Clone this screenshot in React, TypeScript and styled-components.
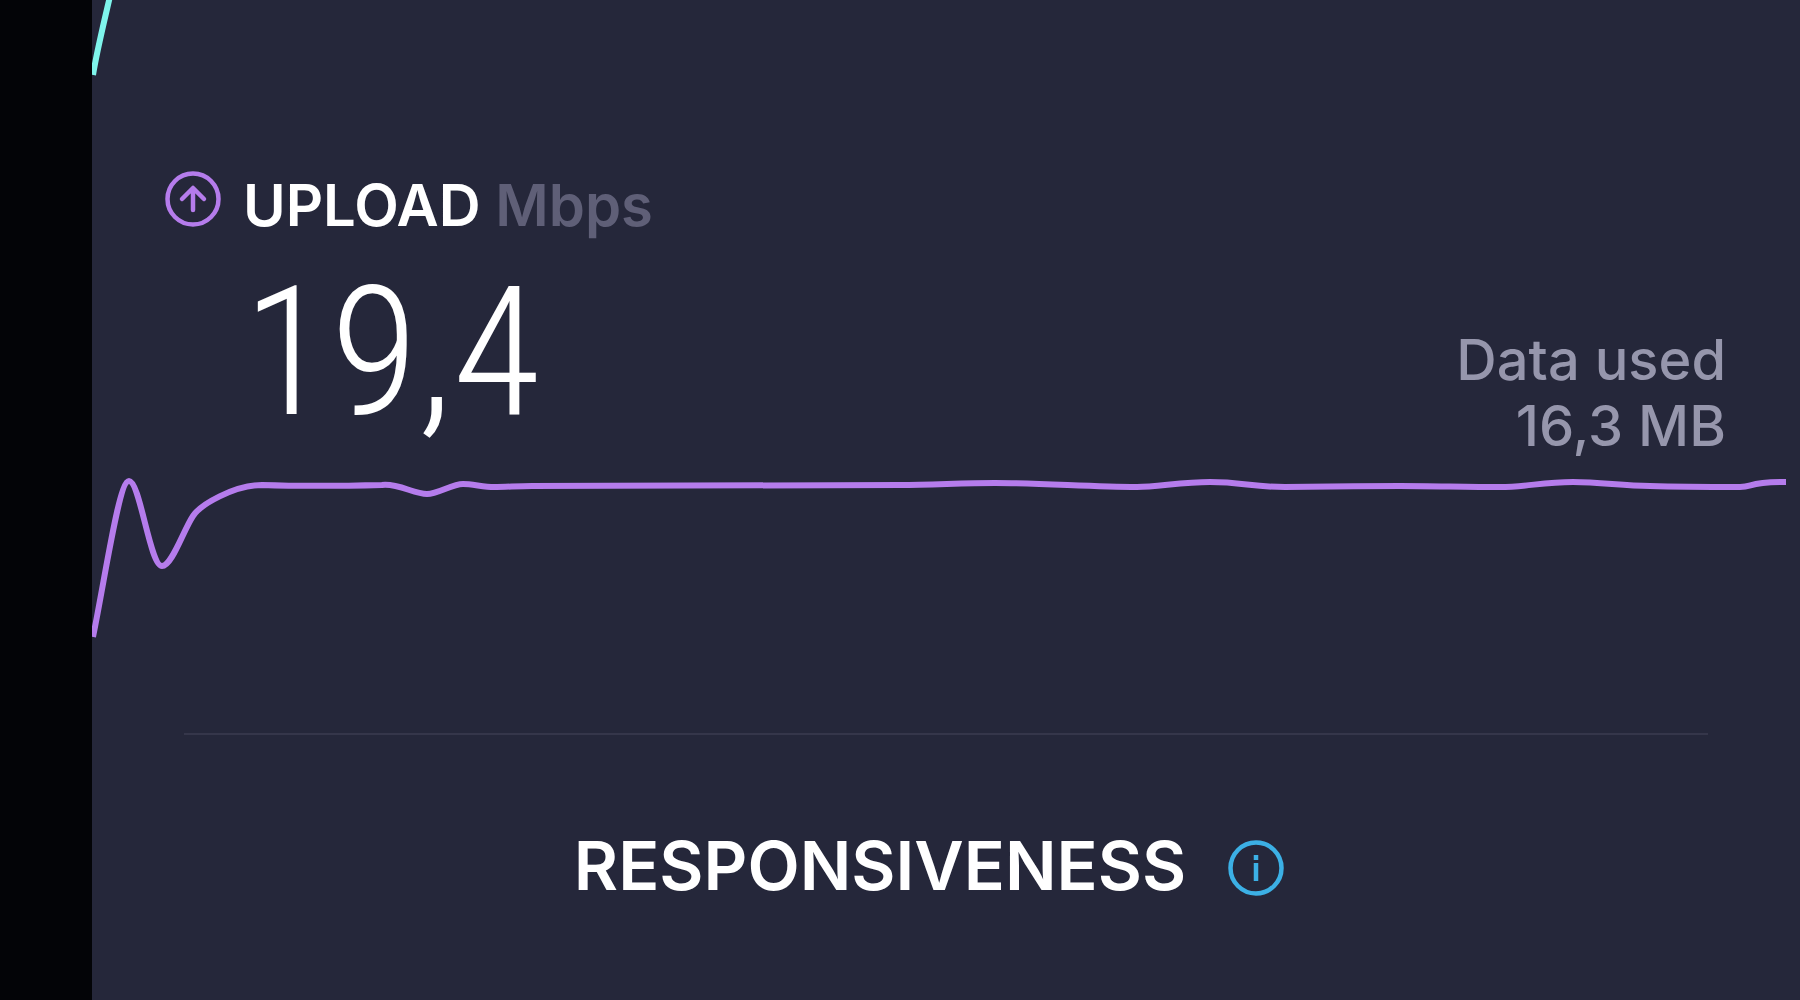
import React from 'react';
import styled, { createGlobalStyle } from 'styled-components';

const GlobalStyle = createGlobalStyle`
  * { box-sizing: border-box; }
  body {
    margin: 0;
    background: #25273a;
    color: #ffffff;
    font-family: Inter, "Liberation Sans", sans-serif;
    font-weight: 500;
  }
`;

const Page = styled.div`
  min-height: 100vh;
  padding-left: 92px;
  background: #030407;
`;

const Panel = styled.main`
  min-height: 100vh;
  background: #25273a;
  overflow: hidden;
`;

const Chart = styled.svg<{ $height: number }>`
  display: block;
  width: 100%;
  height: ${(p) => p.$height}px;
`;

const Trace = styled.path<{ $color: string }>`
  fill: none;
  stroke: ${(p) => p.$color};
  stroke-width: 6px;
  stroke-linejoin: round;
  vector-effect: non-scaling-stroke;
`;

const Summary = styled.section`
  display: flex;
  justify-content: space-between;
  align-items: flex-end;
  padding: 91px 74px 2px 73px;
`;

const Metric = styled.div`
  display: flex;
  align-items: flex-start;
  gap: 22px;
`;

const Icon = styled.svg<{ $color: string }>`
  display: block;
  flex: none;
  width: 56px;
  height: 56px;
  fill: none;
  stroke: ${(p) => p.$color};
  stroke-width: 4.5;
`;

const MetricTitle = styled.h2`
  margin: 0;
  font-size: 58px;
  line-height: 68px;
  font-weight: 600;
`;

const Unit = styled.span`
  color: #5f5f77;
`;

const Value = styled.p`
  margin: 4px 0 0;
  font-family: "Roboto Condensed", Roboto, sans-serif;
  font-size: 180px;
  line-height: 220px;
  font-weight: 300;
`;

const DataUsed = styled.p`
  margin: 0;
  padding-bottom: 4px;
  color: #9696ac;
  font-size: 56px;
  line-height: 66px;
  text-align: right;
`;

const Divider = styled.hr`
  height: 2px;
  margin: 88px 92px 0;
  border: 0;
  background: #35364a;
`;

const Responsiveness = styled.section`
  display: flex;
  justify-content: center;
  align-items: center;
  gap: 42px;
  padding: 89px 126px 89px 92px;
`;

const SectionTitle = styled.h2`
  margin: 0;
  padding-bottom: 6px;
  font-size: 68px;
  line-height: 82px;
  font-weight: 600;
`;

const InfoButton = styled.button`
  padding: 0;
  border: 0;
  background: none;
  cursor: pointer;
`;

const uploadTrace =
  'M1 172 C14 108 27 16 37 16 C48 16 58 101 70 101 C80 101 91 66 101 51 ' +
  'C108 40 142 20 170 20 C200 21 250 21 290 20 C306 18 322 29 335 29 C346 29 360 19 371 19 ' +
  'C380 19 392 22 402 22 C415 22 425 21 440 21 C580 20 700 20 808 20 C840 20 870 18 903 18 ' +
  'C950 18 1000 22 1045 22 C1065 22 1090 17 1118 17 C1150 17 1160 22 1193 22 ' +
  'C1230 22 1270 21 1308 21 C1340 21 1375 22 1408 22 C1435 22 1450 17 1481 17 ' +
  'C1510 17 1530 21 1558 21 C1590 22 1620 22 1648 22 C1662 22 1655 17 1694 17';

export default function App() {
  return (
    <Page>
      <GlobalStyle />
      <Panel>
        <Chart $height={80} viewBox="0 0 1708 80" preserveAspectRatio="none" role="img" aria-label="Download speed">
          <Trace $color="#7ff5ec" d="M1 75 C5 50 13 18 19 -8" />
        </Chart>
        <Summary>
          <Metric>
            <Icon $color="#b57cec" viewBox="0 0 56 56" aria-hidden="true">
              <circle cx="28" cy="28" r="25.5" />
              <path d="M28 39 V18 M17 28 L28 17 L39 28" strokeLinecap="round" strokeLinejoin="round" />
            </Icon>
            <div>
              <MetricTitle>
                UPLOAD <Unit>Mbps</Unit>
              </MetricTitle>
              <Value>19,4</Value>
            </div>
          </Metric>
          <DataUsed>
            Data used
            <br />
            16,3 MB
          </DataUsed>
        </Summary>
        <Chart $height={180} viewBox="0 0 1708 180" preserveAspectRatio="none" role="img" aria-label="Upload speed">
          <Trace $color="#b57cec" d={uploadTrace} />
        </Chart>
        <Divider />
        <Responsiveness>
          <SectionTitle>RESPONSIVENESS</SectionTitle>
          <InfoButton type="button" aria-label="About responsiveness">
            <Icon $color="#3cb0e5" viewBox="0 0 56 56" aria-hidden="true">
              <circle cx="28" cy="28" r="25.5" />
              <path d="M28 23 V41 M28 15 V20" />
            </Icon>
          </InfoButton>
        </Responsiveness>
      </Panel>
    </Page>
  );
}
